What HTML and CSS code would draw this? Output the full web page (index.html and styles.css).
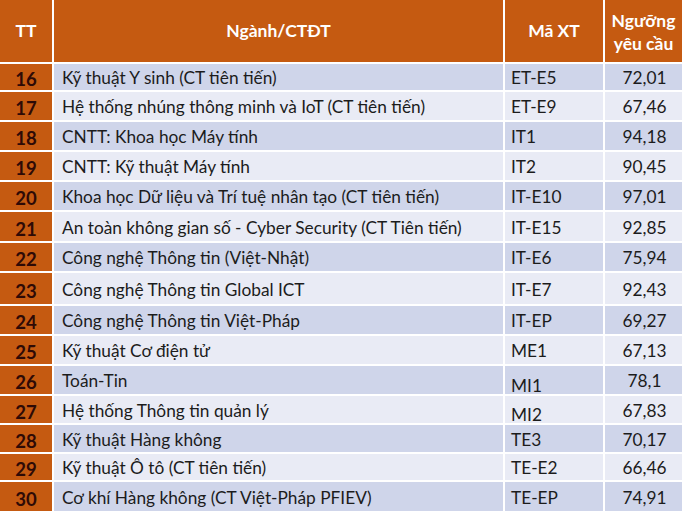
FILE: index.html
```html
<!DOCTYPE html>
<html lang="vi">
<head>
<meta charset="utf-8">
<link rel="stylesheet" href="styles.css">
</head>
<body>
<div class="table">
  <div class="row head">
    <div class="c tt">TT</div>
    <div class="c name">Ngành/CTĐT</div>
    <div class="c code">Mã XT</div>
    <div class="c score">Ngưỡng<br>yêu cầu</div>
  </div>
  <div class="row dark"><div class="c tt">16</div><div class="c name">Kỹ thuật Y sinh (CT tiên tiến)</div><div class="c code">ET-E5</div><div class="c score">72,01</div></div>
  <div class="row light"><div class="c tt">17</div><div class="c name">Hệ thống nhúng thông minh và IoT (CT tiên tiến)</div><div class="c code">ET-E9</div><div class="c score">67,46</div></div>
  <div class="row dark"><div class="c tt">18</div><div class="c name">CNTT: Khoa học Máy tính</div><div class="c code">IT1</div><div class="c score">94,18</div></div>
  <div class="row light"><div class="c tt">19</div><div class="c name">CNTT: Kỹ thuật Máy tính</div><div class="c code">IT2</div><div class="c score">90,45</div></div>
  <div class="row dark"><div class="c tt">20</div><div class="c name">Khoa học Dữ liệu và Trí tuệ nhân tạo (CT tiên tiến)</div><div class="c code">IT-E10</div><div class="c score">97,01</div></div>
  <div class="row light"><div class="c tt">21</div><div class="c name">An toàn không gian số - Cyber Security (CT Tiên tiến)</div><div class="c code">IT-E15</div><div class="c score">92,85</div></div>
  <div class="row dark"><div class="c tt">22</div><div class="c name">Công nghệ Thông tin (Việt-Nhật)</div><div class="c code">IT-E6</div><div class="c score">75,94</div></div>
  <div class="row light"><div class="c tt">23</div><div class="c name">Công nghệ Thông tin Global ICT</div><div class="c code">IT-E7</div><div class="c score">92,43</div></div>
  <div class="row dark"><div class="c tt">24</div><div class="c name">Công nghệ Thông tin Việt-Pháp</div><div class="c code">IT-EP</div><div class="c score">69,27</div></div>
  <div class="row light"><div class="c tt">25</div><div class="c name">Kỹ thuật Cơ điện tử</div><div class="c code">ME1</div><div class="c score">67,13</div></div>
  <div class="row dark"><div class="c tt">26</div><div class="c name">Toán-Tin</div><div class="c code low">MI1</div><div class="c score">78,1</div></div>
  <div class="row light"><div class="c tt">27</div><div class="c name">Hệ thống Thông tin quản lý</div><div class="c code low">MI2</div><div class="c score">67,83</div></div>
  <div class="row dark"><div class="c tt">28</div><div class="c name">Kỹ thuật Hàng không</div><div class="c code">TE3</div><div class="c score">70,17</div></div>
  <div class="row light"><div class="c tt">29</div><div class="c name">Kỹ thuật Ô tô (CT tiên tiến)</div><div class="c code">TE-E2</div><div class="c score">66,46</div></div>
  <div class="row dark"><div class="c tt">30</div><div class="c name">Cơ khí Hàng không (CT Việt-Pháp PFIEV)</div><div class="c code">TE-EP</div><div class="c score">74,91</div></div>
</div>
</body>
</html>
```

FILE: styles.css
```css
html, body {
  margin: 0;
  padding: 0;
  background: #ffffff;
}
body {
  width: 682px;
  height: 511px;
  overflow: hidden;
  font-family: Lato, "Liberation Sans", sans-serif;
}
.table {
  display: grid;
  grid-template-columns: 52px 449px 98px 77px;
  grid-template-rows: 62px 26px 28px 28px 28px 28px 29px 28px 31px 28px 28px 28px 27px 27px 26px 29px;
  column-gap: 2px;
  row-gap: 2px;
  background: #ffffff;
}
.row {
  display: contents;
}
.c {
  display: flex;
  align-items: center;
  font-size: 17.3px;
  color: #1c1c1c;
  line-height: 1;
  white-space: nowrap;
  padding-top: 2px;
}
.dark .c { background: #cfd5ea; }
.light .c { background: #e9ebf5; }
.row .tt {
  background: #c55a11;
  justify-content: center;
  padding-top: 5px;
  font-weight: 700;
  font-size: 18.5px;
  color: #2e0a06;
}
.name {
  padding-left: 8px;
}
.code {
  padding-left: 6px;
}
.code.low {
  align-items: flex-end;
  padding-top: 0;
  padding-bottom: 0;
}
.score {
  justify-content: center;
  padding-left: 2px;
}
.head .c {
  background: #c55a11;
  color: #ffffff;
  font-weight: 700;
  justify-content: center;
  text-align: center;
  padding: 0;
  font-size: 17.5px;
}
.head .tt {
  padding-top: 0;
  color: #ffffff;
}
.head .score {
  line-height: 1.3;
  padding-top: 3px;
}
```
